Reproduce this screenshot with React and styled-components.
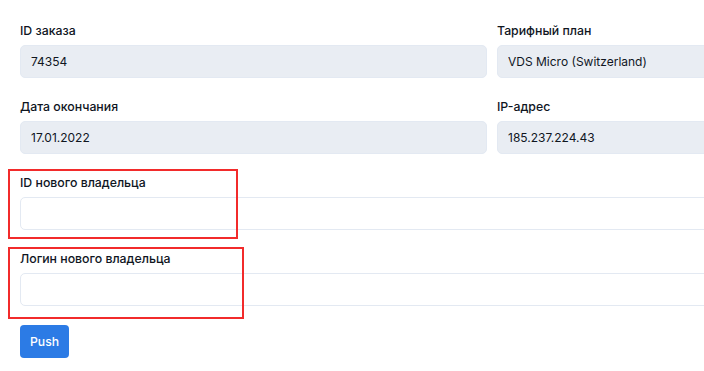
import React from 'react'
import styled, { createGlobalStyle } from 'styled-components'

const GlobalStyle = createGlobalStyle`
    html, body {
        margin: 0;
        padding: 0;
        background: #ffffff;
        overflow: hidden;
    }
    body {
        font-family: Inter, "Open Sans", "Liberation Sans", sans-serif;
        color: #344050;
    }
`

const Card = styled.div`
    width: 984px;
    padding: 21px 20px 20px 20px;
    box-sizing: border-box;
`

const Grid = styled.div`
    display: grid;
    grid-template-columns: 467px 467px;
    column-gap: 10px;
`

const Group = styled.div`
    position: relative;
    margin-bottom: 19px;
`

const Label = styled.label`
    display: block;
    font-size: 12.3px;
    line-height: 19px;
    font-weight: 450;
    color: #10161f;
    margin-bottom: 5px;
`

const Input = styled.input`
    display: block;
    width: 100%;
    height: 33px;
    box-sizing: border-box;
    padding: 0 10px;
    font-family: inherit;
    font-size: 12px;
    color: #10161f;
    border: 1px solid #e3e9f2;
    border-radius: 5px;
    background: ${p => (p.disabled ? '#e9edf3' : '#ffffff')};
    outline: none;
`

const Marker = styled.div`
    position: absolute;
    top: ${p => p.top}px;
    left: -12px;
    width: ${p => p.w}px;
    height: ${p => p.h}px;
    border: 2px solid #f22b2b;
    box-sizing: border-box;
    pointer-events: none;
`

const Button = styled.button`
    height: 33px;
    padding: 0 10px;
    border: none;
    border-radius: 4px;
    background: #2c7be5;
    color: #ffffff;
    font-family: inherit;
    font-size: 12.2px;
    font-weight: 500;
    cursor: pointer;
`

const fields = [
    { label: 'ID заказа', value: '74354' },
    { label: 'Тарифный план', value: 'VDS Micro (Switzerland)' },
    { label: 'Дата окончания', value: '17.01.2022' },
    { label: 'IP-адрес', value: '185.237.224.43' },
]

const App = () => {
  return (
    <>
        <GlobalStyle/>
        <Card>
            <Grid>
                {fields.map(f => (
                    <Group key={f.label}>
                        <Label>{f.label}</Label>
                        <Input disabled value={f.value} readOnly/>
                    </Group>
                ))}
            </Grid>

            <Group>
                <Label>ID нового владельца</Label>
                <Input/>
                <Marker top={-4} w={230} h={70}/>
            </Group>

            <Group>
                <Label>Логин нового владельца</Label>
                <Input/>
                <Marker top={-2} w={236} h={72}/>
            </Group>

            <Button>Push</Button>
        </Card>
    </>
  )
}

export default App
